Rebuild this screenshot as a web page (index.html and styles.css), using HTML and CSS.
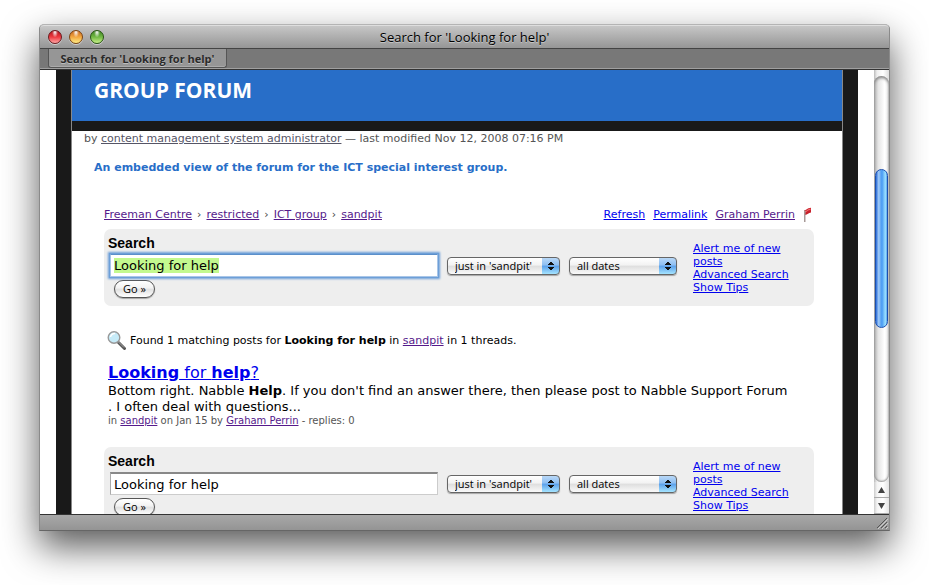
FILE: index.html
```
<!DOCTYPE html>
<html lang="en">
<head>
<meta charset="UTF-8">
<meta name="viewport" content="width=device-width, initial-scale=1.0">
<title>Search for 'Looking for help'</title>
<link rel="stylesheet" href="styles.css">
</head>
<body>
<div class="window">
  <div class="titlebar">
    <div class="lights">
      <button class="light red" aria-label="Close"></button>
      <button class="light amber" aria-label="Minimise"></button>
      <button class="light green" aria-label="Zoom"></button>
    </div>
    <div class="title">Search for 'Looking for help'</div>
  </div>
  <div class="tabstrip">
    <div class="tab">Search for 'Looking for help'</div>
  </div>

  <div class="viewport">
    <div class="page">
      <div class="sheet">
        <div class="banner"><h1>GROUP FORUM</h1></div>
        <p class="byline">by <a href="#">content management system administrator</a> — last modified Nov 12, 2008 07:16 PM</p>
        <p class="description">An embedded view of the forum for the ICT special interest group.</p>

        <div class="forum">
          <div class="toolbar">
            <div class="crumbs">
              <a class="visited" href="#">Freeman Centre</a> <span>›</span>
              <a class="visited" href="#">restricted</a> <span>›</span>
              <a class="visited" href="#">ICT group</a> <span>›</span>
              <a class="visited" href="#">sandpit</a>
            </div>
            <div class="tools">
              <a href="#">Refresh</a>
              <a href="#">Permalink</a>
              <a class="visited" href="#">Graham Perrin</a>
              <svg class="flag" width="11" height="16" viewBox="0 0 11 16">
                <path d="M1 3.5C3 3.5 4 1 8 .8V5.500C5.500 5.500 4.500 8 2 8z" fill="#c8202b"/>
                <path d="M2 4C4 4 5 1.800 7.500 1.500V3C5 3 4 5 2 5.500z" fill="#f0686c"/>
                <path d="M1 3.500L2.500 3.500 2.500 15 1 15z" fill="#a79a98"/>
              </svg>
            </div>
          </div>

          <form class="search">
            <div class="search-main">
              <label for="query">Search</label>
              <div class="search-row">
                <input type="text" id="query" value="Looking for help" autofocus>
                <select class="scope" aria-label="Scope"><option>just in 'sandpit'</option></select>
                <select class="dates" aria-label="Dates"><option>all dates</option></select>
              </div>
              <button type="button" class="go">Go »</button>
            </div>
            <div class="search-links">
              <a href="#">Alert me of new posts</a><br>
              <a href="#">Advanced Search</a><br>
              <a href="#">Show Tips</a>
            </div>
          </form>

          <div class="found">
            <svg width="20" height="20" viewBox="0 0 20 20">
              <path d="M11.500 12.500L17.500 18.500" stroke="#555" stroke-width="3" stroke-linecap="round"/>
              <path d="M11.500 12L17 17.500" stroke="#aaa" stroke-width="1"/>
              <circle cx="7" cy="7.500" r="5.800" fill="#c6ebf8" stroke="#999" stroke-width="1.400"/>
              <path d="M3.500 7A4 4 0 0 1 8 3.500" stroke="#fff" stroke-width="1.500" fill="none"/>
            </svg>
            <span>Found 1 matching posts for <b>Looking for help</b> in <a class="visited" href="#">sandpit</a> in 1 threads.</span>
          </div>

          <div class="result">
            <h2><a href="#"><b>Looking</b> for <b>help</b>?</a></h2>
            <p>Bottom right. Nabble <b>Help</b>. If you don't find an answer there, then please post to Nabble Support Forum<br>. I often deal with questions...</p>
            <div class="meta">in <a class="visited" href="#">sandpit</a> on Jan 15 by <a class="visited" href="#">Graham Perrin</a> - replies: 0</div>
          </div>

          <form class="search">
            <div class="search-main">
              <label for="query2">Search</label>
              <div class="search-row">
                <input type="text" id="query2" value="Looking for help">
                <select class="scope" aria-label="Scope"><option>just in 'sandpit'</option></select>
                <select class="dates" aria-label="Dates"><option>all dates</option></select>
              </div>
              <button type="button" class="go">Go »</button>
            </div>
            <div class="search-links">
              <a href="#">Alert me of new posts</a><br>
              <a href="#">Advanced Search</a><br>
              <a href="#">Show Tips</a>
            </div>
          </form>
        </div>
      </div>
    </div>

    <div class="scrollbar">
      <div class="track"><div class="thumb"></div></div>
      <button class="arrow" aria-label="Scroll up"><svg width="7" height="6"><path d="M3.500 0L7 6H0z" fill="#444"/></svg></button>
      <button class="arrow" aria-label="Scroll down"><svg width="7" height="6"><path d="M3.500 6L7 0H0z" fill="#444"/></svg></button>
    </div>
  </div>

  <div class="statusbar">
    <svg width="12" height="12" viewBox="0 0 12 12">
      <path d="M1 11L11 1M5 11L11 5M9 11L11 9" stroke="#555" stroke-width="1"/>
      <path d="M2 12L12 2M6 12L12 6M10 12L12 10" stroke="#ccc" stroke-width="1"/>
    </svg>
  </div>
</div>

<script>
  // start with the search term selected
  const query = document.getElementById('query');
  query.focus();
  query.select();
</script>
</body>
</html>
```
FILE: styles.css
```
* {
  box-sizing: border-box;
}

body {
  margin: 0;
  height: 100vh;
  padding: 24px 39px 54px;
  background: #fff;
  font-family: "DejaVu Sans", Verdana, sans-serif;
  font-size: 11px;
  color: #000;
  overflow: hidden;
}

h1, h2, p {
  margin: 0;
}

a {
  color: #00e;
}

a.visited {
  color: #551a8b;
}

/* Window frame */
.window {
  display: flex;
  flex-direction: column;
  height: 100%;
  border: 1px solid #8a8a8a;
  border-top-color: #b4b4b4;
  border-bottom-color: #666;
  border-radius: 5px 5px 0 0;
  background: #969696;
  box-shadow: 0 16px 36px rgba(0, 0, 0, 0.65);
}

.titlebar {
  display: grid;
  grid-template-columns: 1fr auto 1fr;
  align-items: center;
  height: 23px;
  padding: 0 8px;
  border-top: 1px solid #dedede;
  border-radius: 4px 4px 0 0;
  background: linear-gradient(#c6c6c6, #969696);
}

.lights {
  display: flex;
  gap: 7px;
}

.light {
  width: 14px;
  height: 14px;
  padding: 0;
  border: 1px solid;
  border-radius: 50%;
  box-shadow: 0 1px 0 rgba(255, 255, 255, 0.5);
}

.red {
  border-color: #6b1a1e;
  background: radial-gradient(ellipse at 50% 10%, #fff 0, rgba(255, 255, 255, 0) 35%), linear-gradient(#b3141c, #ee3b40 50%, #ffa5a5);
}

.amber {
  border-color: #7a4312;
  background: radial-gradient(ellipse at 50% 10%, #fff 0, rgba(255, 255, 255, 0) 35%), linear-gradient(#c9661c, #f3a740 50%, #ffed85);
}

.green {
  border-color: #275412;
  background: radial-gradient(ellipse at 50% 10%, #fff 0, rgba(255, 255, 255, 0) 35%), linear-gradient(#3f8423, #72b944 50%, #c8f08a);
}

.title {
  font: 13px/20px "Open Sans", "Lucida Grande", sans-serif;
  text-shadow: 0 1px 0 rgba(255, 255, 255, 0.4);
}

.tabstrip {
  display: flex;
  height: 22px;
  padding-left: 8px;
  border-top: 1px solid #444;
  border-bottom: 1px solid #333;
  background: #787878;
  box-shadow: inset 0 -1px 0 #a0a0a0;
}

.tab {
  min-width: 179px;
  height: 19px;
  padding: 0 8px;
  border: 1px solid #555;
  border-top: 0;
  border-radius: 0 0 3px 3px;
  background: #969696;
  box-shadow: inset 0 -1px 0 #aaa;
  color: #2a2a2a;
  font: bold 11px/20px "Open Sans", "Lucida Grande", sans-serif;
  text-align: center;
  text-shadow: 0 1px 0 rgba(255, 255, 255, 0.4);
}

/* Scrolled page */
.viewport {
  flex: 1;
  display: flex;
  min-height: 0;
  background: #fff;
}

.page {
  flex: 1;
  min-width: 0;
  padding: 0 16px;
  overflow: hidden;
}

.sheet {
  border: solid #191919;
  border-width: 0 15px;
  background: #fff;
  box-shadow: inset 1px 0 0 #888, inset -1px 0 0 #888;
  padding: 0 1px 40px;
}

.banner {
  height: 61px;
  padding: 6px 22px;
  border-bottom: 10px solid #191919;
  background: #286ec8;
}

.banner h1 {
  color: #fff;
  font: bold 21px/28px "Open Sans", "Lucida Grande", sans-serif;
}

.byline {
  padding: 0 12px;
  color: #555;
  line-height: 16px;
}

.byline a {
  color: #555566;
}

.description {
  padding: 12px 22px;
  color: #286ec8;
  font-weight: bold;
  line-height: 18px;
}

.forum {
  padding: 17px 28px 0 32px;
}

.toolbar {
  display: flex;
  justify-content: space-between;
  height: 23px;
  line-height: 18px;
  color: #444;
}

.crumbs {
  display: flex;
  gap: 5px;
}

.tools {
  display: flex;
  gap: 8px;
}

.flag {
  margin-top: 1px;
}

.search {
  display: flex;
  gap: 16px;
  height: 77px;
  padding: 6px 14px 0 4px;
  border-radius: 7px;
  background: #eee;
}

.search-main {
  flex: 1;
}

.search-main label {
  display: block;
  font: bold 14px/16px "Liberation Sans", Arial, sans-serif;
}

.search-row {
  display: flex;
  align-items: center;
  gap: 9px;
  padding: 3px 0 3px 2px;
}

.search-row input {
  flex: 1;
  min-width: 0;
  height: 23px;
  padding: 0 3px;
  border: 1px solid #ccc;
  border-top: 2px solid #888;
  border-left-color: #aaa;
  background: #fff;
  font: 13px/18px "DejaVu Sans", Verdana, sans-serif;
}

.search-row input:focus {
  border-color: #5b8fca #a9c6e8 #a9c6e8;
  border-width: 1px;
  outline: 0;
  box-shadow: 0 0 0 1px #6d9fd8, 0 0 2px 2px #6d9fd8;
}

.search-row input::selection {
  background: #c3f98f;
  color: #000;
}

.search-row select {
  appearance: none;
  height: 18px;
  padding: 0 20px 0 7px;
  border: 1px solid #666;
  border-radius: 4px;
  background:
    conic-gradient(from 143deg at 50% 0, #111 74deg, transparent 0) no-repeat right 5px top 3px / 6px 4px,
    conic-gradient(from -37deg at 50% 100%, #111 74deg, transparent 0) no-repeat right 5px bottom 3px / 6px 4px,
    linear-gradient(#b9d8f7, #8cbef2 45%, #5a9fea 50%, #a5e4ff) no-repeat right / 17px 100%,
    linear-gradient(#fff, #f2f2f2 45%, #dedede 50%, #fafafa);
  box-shadow: 0 1px 1px rgba(0, 0, 0, 0.3);
  font: 11px/16px "Open Sans", "Lucida Grande", sans-serif;
  color: #000;
}

.scope {
  width: 113px;
}

.dates {
  width: 108px;
}

.go {
  display: block;
  width: 41px;
  height: 18px;
  margin-left: 6px;
  padding: 0;
  border: 1px solid #555;
  border-radius: 9px;
  background: linear-gradient(#fff, #f2f2f2 45%, #e0e0e0 50%, #fff);
  box-shadow: 0 1px 1px rgba(0, 0, 0, 0.3);
  font: 11px/16px "Open Sans", "Lucida Grande", sans-serif;
  color: #000;
}

.search-links {
  width: 107px;
  padding-top: 7px;
  line-height: 13px;
}

.found {
  display: flex;
  align-items: center;
  gap: 3px;
  padding: 24px 3px 13px;
}

.result {
  padding: 0 4px 20px;
}

.result h2 {
  font-size: 16px;
  font-weight: normal;
  line-height: 20px;
}

.result p {
  font-size: 13px;
  line-height: 16px;
  white-space: nowrap;
}

.meta {
  color: #555;
  font-size: 10px;
  line-height: 12px;
}

/* Scrollbar */
.scrollbar {
  display: flex;
  flex-direction: column;
  width: 15px;
  padding-top: 6px;
  background: linear-gradient(90deg, #bbb, #eee 20%, #fff 60%, #ddd);
}

.track {
  flex: 1;
  position: relative;
  border-radius: 8px;
  background: linear-gradient(90deg, #b5b5b5, #e6e6e6 30%, #fff 70%, #eee);
  box-shadow: inset 0 2px 3px #888, inset 0 -1px 2px #999;
}

.thumb {
  position: absolute;
  top: 23%;
  left: 1px;
  right: 1px;
  height: 39%;
  border: 1px solid #1b4fae;
  border-radius: 7px;
  background: linear-gradient(90deg, #2a6bd8, #a4cdf8 25%, #57a3f3 45%, #4a9cf4 55%, #9ae0ff 85%, #5aa5ee);
}

.arrow {
  display: flex;
  align-items: center;
  justify-content: center;
  height: 16px;
  padding: 0;
  border: 0;
  border-bottom: 1px solid #aaa;
  background: linear-gradient(90deg, #ccc, #f4f4f4 20%, #fff 60%, #e4e4e4);
}

.statusbar {
  display: flex;
  align-items: flex-end;
  justify-content: flex-end;
  height: 16px;
  padding: 0 1px 1px;
  border-top: 1px solid #333;
  background: linear-gradient(#a8a8a8, #949494);
}
```
